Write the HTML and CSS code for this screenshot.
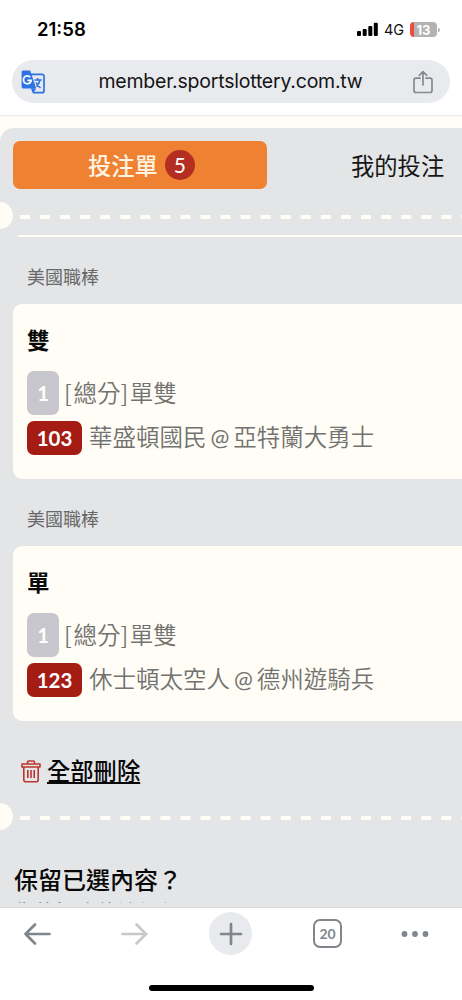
FILE: index.html
```html
<!DOCTYPE html>
<html lang="zh-Hant">
<head>
<meta charset="utf-8">
<meta name="viewport" content="width=device-width, initial-scale=1">
<title>投注單</title>
<link rel="stylesheet" href="styles.css">
</head>
<body>
<div class="screen">
  <header class="browser-top">
    <div class="status">
      <span class="clock">21:58</span>
      <div class="status-right">
        <svg class="signal" width="21" height="15" viewBox="0 0 21 15"><rect x="0" y="9" width="4" height="5" rx="1"/><rect x="5.7" y="7" width="4" height="7" rx="1"/><rect x="11.3" y="4" width="4" height="10" rx="1"/><rect x="16.8" y="0.8" width="4" height="13.2" rx="1"/></svg>
        <span class="network">4G</span>
        <div class="battery"><span>13</span></div>
        <i class="battery-tip"></i>
      </div>
    </div>
    <div class="address">
      <svg class="translate" width="24" height="24" viewBox="0 0 24 24">
        <path d="M9.5 4.3H21a2 2 0 0 1 2 2V20.700a2 2 0 0 1-2 2H12.500L10.700 18.200" fill="#e8eaf0" stroke="#2f73e3" stroke-width="1.700"/>
        <path d="M2 .6H9.200L15.200 18.400H2A1.600 1.600 0 0 1 .6 17V2A1.500 1.500 0 0 1 2 .6Z" fill="#2f73e3"/>
        <path d="M15.200 18.400H11L12.500 22.700Z" fill="#2f73e3"/>
        <path d="M9.300 7.300A3.900 3.900 0 1 0 10.200 10.400H6.500" fill="none" stroke="#fff" stroke-width="1.700"/>
        <path d="M13.500 10H20.700M16.700 8V10M19 10Q18 14 15.500 16.500M15 12.500Q16.500 15.500 19.500 18" fill="none" stroke="#2f73e3" stroke-width="1.600"/>
      </svg>
      <span class="url">member.sportslottery.com.tw</span>
      <svg class="share" width="20" height="24" viewBox="0 0 20 24"><path d="M7 8.200H3Q1 8.200 1 10.200V20.500Q1 22.500 3 22.500H17Q19 22.500 19 20.500V10.200Q19 8.200 17 8.200H13M10 15V2M6.300 5.400L10 1.700L13.700 5.400" fill="none" stroke="#858a8f" stroke-width="1.700" stroke-linecap="round" stroke-linejoin="round"/></svg>
    </div>
  </header>

  <main class="page">
    <section class="slip">
      <nav class="tabs">
        <a class="tab tab-active">投注單<span class="count">5</span></a>
        <a class="tab tab-other">我的投注</a>
      </nav>
      <div class="tear"><i class="notch"></i><svg class="dashes" width="442" height="4"><path d="M0 2H442" stroke="#fffdf5" stroke-width="4" stroke-dasharray="10 10.060"/></svg></div>
      <div class="card-edge"></div>

      <h3 class="league">美國職棒</h3>
      <article class="card">
        <h2 class="pick">雙</h2>
        <div class="market"><span class="badge-grey">1</span><span class="market-name"><b>[</b>總分<b>]</b>單雙</span></div>
        <div class="match"><span class="badge-red">103</span><span class="teams">華盛頓國民<em>@</em>亞特蘭大勇士</span></div>
      </article>

      <h3 class="league">美國職棒</h3>
      <article class="card">
        <h2 class="pick">單</h2>
        <div class="market"><span class="badge-grey">1</span><span class="market-name"><b>[</b>總分<b>]</b>單雙</span></div>
        <div class="match"><span class="badge-red">123</span><span class="teams">休士頓太空人<em>@</em>德州遊騎兵</span></div>
      </article>

      <div class="delete-row">
        <svg width="20" height="23" viewBox="0 0 20 23" fill="none" stroke="#b93630" stroke-width="1.600" stroke-linejoin="round"><path d="M1 4H19V7H1ZM6.500 4V2.300Q6.500 1 7.800 1H12.200Q13.500 1 13.500 2.300V4M2.800 7V19.700Q2.800 21.700 4.800 21.700H15.200Q17.200 21.700 17.200 19.700V7M6.800 10V18M10 10V18M13.200 10V18"/></svg>
        <a class="delete">全部刪除</a>
      </div>
      <div class="tear"><i class="notch"></i><svg class="dashes" width="442" height="4"><path d="M0 2H442" stroke="#fffdf5" stroke-width="4" stroke-dasharray="10 10.060"/></svg></div>
      <h2 class="keep">保留已選內容？</h2>
      <div class="keep-note"><p>您的投注將被保留</p></div>
    </section>
  </main>

  <footer class="browser-bottom">
    <div class="toolbar">
      <svg width="28" height="24" viewBox="0 0 28 24" fill="none" stroke="#80868b" stroke-width="2.700" stroke-linecap="round" stroke-linejoin="round"><path d="M26.500 12H2.500M12 2.500L2.500 12L12 21.500"/></svg>
      <svg class="forward" width="28" height="24" viewBox="0 0 28 24" fill="none" stroke="#c7c8c9" stroke-width="2.700" stroke-linecap="round" stroke-linejoin="round"><path d="M2.500 12H26.500M16.500 2.500L26 12L16.500 21.500"/></svg>
      <div class="plus"><svg width="24" height="24" viewBox="0 0 24 24" stroke="#80868b" stroke-width="2.700" stroke-linecap="round"><path d="M12 2V22M2 12H22"/></svg></div>
      <span class="tab-count">20</span>
      <svg class="more" width="28" height="8" viewBox="0 0 28 8" fill="#80868b"><circle cx="3.500" cy="4" r="2.900"/><circle cx="14" cy="4" r="2.900"/><circle cx="24.500" cy="4" r="2.900"/></svg>
    </div>
    <div class="home-bar"></div>
  </footer>
</div>
</body>
</html>
```
FILE: styles.css
```css
* { box-sizing: border-box; margin: 0; padding: 0; }
body { background: #fff; font-family: "Lato", "Noto Sans CJK TC", sans-serif; color: #111; overflow: hidden; }
svg { display: block; flex: none; }
.screen { width: 462px; height: 1000px; display: flex; flex-direction: column; overflow: hidden; }

.browser-top { height: 116px; flex: none; border-bottom: 1px solid #ecebe7; font-family: "Inter", sans-serif; }
.status { height: 60px; display: flex; justify-content: space-between; padding: 0 22px 0 37px; }
.clock { font-size: 18.500px; font-weight: 600; line-height: 59px; color: #000; }
.status-right { display: flex; align-items: center; }
.signal { margin-bottom: 2px; }
.network { font-size: 14.500px; width: 20px; margin-left: 6px; padding-bottom: 1px; color: #111; white-space: nowrap; }
.battery { width: 27px; height: 15px; margin: 0 0 1px 6px; border-radius: 4px; background: linear-gradient(90deg, #eb4e40 4px, #b3b3b3 4px); display: flex; align-items: center; justify-content: center; font-size: 13px; font-weight: 700; color: #fff; }
.battery-tip { width: 2px; height: 4px; margin-left: 1px; background: #b3b3b3; border-radius: 0 2px 2px 0; }
.address { height: 43px; margin: 0 12px; padding: 0 17px 0 9px; border-radius: 22px; background: #e8eaee; display: flex; align-items: center; justify-content: space-between; }
.url { font-size: 19.500px; letter-spacing: -0.220px; color: #151515; margin-left: 3px; padding-bottom: 1px; white-space: nowrap; }

.page { height: 792px; flex: none; padding-top: 12px; background: #fffdf5; overflow: hidden; }
.slip { height: 780px; background: #e4e5e7; border-top-left-radius: 14px; overflow: hidden; border-bottom: 1px solid #d7d8d9; }
.tabs { height: 74px; padding: 13px 0 0 13px; display: flex; }
.tab { height: 48px; padding-bottom: 1px; display: flex; align-items: center; font-size: 23.300px; white-space: nowrap; }
.tab-active { width: 254px; padding-left: 75px; background: #ee8132; color: #fff3e2; border-radius: 7px; font-weight: 500; }
.tab-other { margin-left: 84px; color: #161616; }
.count { width: 30px; height: 30px; margin: 1px 0 0 7px; padding-bottom: 1px; border-radius: 50%; background: #b42e21; display: flex; align-items: center; justify-content: center; font-size: 21px; font-weight: 400; color: #fff; }
.tear { height: 27px; display: flex; align-items: center; gap: 7px; }
.notch { width: 27px; height: 27px; margin-left: -14px; border-radius: 50%; background: #fffdf5; flex: none; }
.dashes { margin-top: 3px; }
.card-edge { height: 8px; margin-left: 13px; border-bottom: 2px solid #fffdf5; border-bottom-left-radius: 8px; clip-path: inset(6px 0 0 4px); }
.league { height: 67px; padding: 13px 0 0 27px; font-size: 18px; font-weight: 400; line-height: 54px; color: #686868; }
.card { height: 175px; margin-left: 13px; padding: 18px 0 0 14px; background: #fffdf5; border-radius: 9px 0 0 9px; }
.pick { font-size: 22.500px; font-weight: 700; line-height: 38px; height: 49px; color: #090909; }
.market, .match { display: flex; align-items: center; color: #727270; font-size: 23.500px; font-weight: 350; white-space: nowrap; }
.market { height: 44px; }
.market-name { margin-left: 5px; padding-bottom: 3px; }
.market-name b { font: 350 23.500px "Noto Sans CJK TC", sans-serif; line-height: 1; letter-spacing: 1.600px; }
.badge-grey { width: 32px; height: 44px; border-radius: 7px; background: #c7c7cd; color: #fff; display: flex; align-items: center; justify-content: center; font-size: 20px; font-weight: 700; }
.match { height: 34px; margin-top: 6px; gap: 7px; }
.teams { padding-bottom: 4px; }
.match em { font-style: normal; font-weight: 400; font-size: 22.500px; margin: 0 4px; }
.badge-red { width: 55px; height: 34px; border-radius: 7px; background: #a51c14; color: #fff; display: flex; align-items: center; justify-content: center; font-size: 20.500px; font-weight: 700; }
.delete-row { height: 82px; padding: 18px 0 0 21px; display: flex; gap: 6px; align-items: flex-start; }
.delete-row svg { margin-top: 21px; }
.delete { font-size: 23.300px; font-weight: 500; line-height: 64px; color: #080808; text-decoration: underline; text-decoration-thickness: 2px; text-underline-offset: 2px; }
.keep { margin-top: 32px; padding: 1px 0 0 14px; font-size: 24px; font-weight: 500; line-height: 34px; height: 34px; color: #080808; white-space: nowrap; }
.keep-note { height: 7px; padding-left: 14px; overflow: hidden; }
.keep-note p { font-size: 20.500px; line-height: 32px; color: #555; white-space: nowrap; }

.browser-bottom { height: 92px; flex: none; background: #fff; }
.toolbar { height: 77px; padding: 3px 31px 0 23px; display: flex; align-items: flex-start; }
.toolbar > svg { margin-top: 11px; }
.toolbar .forward { margin-left: 69px; }
.plus { width: 43px; height: 43px; margin: 1px 0 0 61px; border-radius: 50%; background: #e8eaee; display: flex; align-items: center; justify-content: center; }
.tab-count { width: 29px; height: 29px; margin: 8px 0 0 61px; border: 2px solid #80868b; border-radius: 7px; display: flex; align-items: center; justify-content: center; font: 700 14px "Lato", sans-serif; color: #80868b; }
.toolbar .more { margin: 19px 0 0 59px; }
.home-bar { width: 165px; height: 6px; margin: 0 auto; border-radius: 3px; background: #000; }
```
